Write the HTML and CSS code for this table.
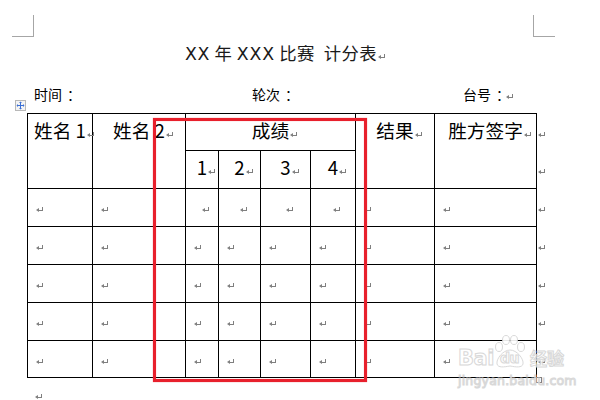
FILE: index.html
```html
<!DOCTYPE html>
<html lang="zh-CN">
<head>
<meta charset="utf-8">
<title>计分表</title>
<link rel="stylesheet" href="styles.css">
</head>
<body>
<div class="page">
  <div class="corners">
    <span class="corner corner-l"></span>
    <span class="corner corner-r"></span>
  </div>

  <h1 class="title"><span class="lat">XX</span> 年 <span class="lat">XXX</span> 比赛 &nbsp;计分表<i class="ret tail"></i></h1>

  <div class="info">
    <span>时间<span class="colon">：</span></span>
    <span>轮次<span class="colon">：</span></span>
    <span>台号<span class="colon">：</span><i class="ret"></i></span>
  </div>

  <div class="table-wrap">
    <div class="grid">
      <div class="cell h rs2">姓名 1<i class="ret tail"></i></div>
      <div class="cell h rs2">姓名 2<i class="ret tail"></i></div>
      <div class="cell h cs4">成绩<i class="ret tail"></i></div>
      <div class="cell h rs2">结果<i class="ret tail"></i></div>
      <div class="cell h rs2">胜方签字<i class="ret tail"></i></div>
      <div class="cell h">1<i class="ret tail"></i></div>
      <div class="cell h">2<i class="ret tail"></i></div>
      <div class="cell h">3<i class="ret tail"></i></div>
      <div class="cell h">4<i class="ret tail"></i></div>

      <div class="cell l"><i class="ret"></i></div>
      <div class="cell l"><i class="ret"></i></div>
      <div class="cell c"><i class="ret"></i></div>
      <div class="cell c"><i class="ret"></i></div>
      <div class="cell c"><i class="ret"></i></div>
      <div class="cell c"><i class="ret"></i></div>
      <div class="cell l"><i class="ret"></i></div>
      <div class="cell l"><i class="ret"></i></div>

      <div class="cell l"><i class="ret"></i></div>
      <div class="cell l"><i class="ret"></i></div>
      <div class="cell l"><i class="ret"></i></div>
      <div class="cell l"><i class="ret"></i></div>
      <div class="cell l"><i class="ret"></i></div>
      <div class="cell l"><i class="ret"></i></div>
      <div class="cell l"><i class="ret"></i></div>
      <div class="cell l"><i class="ret"></i></div>

      <div class="cell l"><i class="ret"></i></div>
      <div class="cell l"><i class="ret"></i></div>
      <div class="cell l"><i class="ret"></i></div>
      <div class="cell l"><i class="ret"></i></div>
      <div class="cell l"><i class="ret"></i></div>
      <div class="cell l"><i class="ret"></i></div>
      <div class="cell l"><i class="ret"></i></div>
      <div class="cell l"><i class="ret"></i></div>

      <div class="cell l"><i class="ret"></i></div>
      <div class="cell l"><i class="ret"></i></div>
      <div class="cell l"><i class="ret"></i></div>
      <div class="cell l"><i class="ret"></i></div>
      <div class="cell l"><i class="ret"></i></div>
      <div class="cell l"><i class="ret"></i></div>
      <div class="cell l"><i class="ret"></i></div>
      <div class="cell l"><i class="ret"></i></div>

      <div class="cell l"><i class="ret"></i></div>
      <div class="cell l"><i class="ret"></i></div>
      <div class="cell l"><i class="ret"></i></div>
      <div class="cell l"><i class="ret"></i></div>
      <div class="cell l"><i class="ret"></i></div>
      <div class="cell l"><i class="ret"></i></div>
      <div class="cell l"><i class="ret"></i></div>
      <div class="cell l"><i class="ret"></i></div>
    </div>
    <div class="rowends">
      <div class="rowend"><i class="ret"></i></div>
      <div class="rowend"><i class="ret"></i></div>
      <div class="rowend"><i class="ret"></i></div>
      <div class="rowend"><i class="ret"></i></div>
      <div class="rowend"><i class="ret"></i></div>
      <div class="rowend"><i class="ret"></i></div>
      <div class="rowend"><i class="ret"></i></div>
    </div>
  </div>

  <p class="after"><i class="ret"></i></p>

  <span class="move-handle">
    <svg width="11" height="11" viewBox="0 0 11 11">
      <rect x="0.5" y="0.5" width="10" height="10" fill="#f4f4f4" stroke="#b8b8b8"/>
      <path d="M5.5 2 V9 M2 5.5 H9" stroke="#3b6fd4" stroke-width="1"/>
      <path d="M5.5 1.5 L4 3 H7 Z M5.5 9.5 L4 8 H7 Z M1.5 5.5 L3 4 V7 Z M9.5 5.5 L8 4 V7 Z" fill="#3b6fd4"/>
    </svg>
  </span>
  <span class="resize-handle"></span>

  <div class="highlight"></div>

  <div class="watermark">
    <div class="wm-logo">
      <span class="wm-bai">Bai</span>
      <span class="wm-paw">
        <svg width="36" height="34" viewBox="0 0 36 34">
          <g fill="#ffffff" stroke="#d6d6d6" stroke-width="1">
            <ellipse cx="7" cy="12" rx="3.5" ry="4.5"/>
            <ellipse cx="14" cy="5" rx="3.5" ry="4.5"/>
            <ellipse cx="22" cy="5" rx="3.5" ry="4.5"/>
            <ellipse cx="29" cy="12" rx="3.5" ry="4.5"/>
            <path d="M18 15 C11 15 4 24 5 29 C6 33 12 32 18 31 C24 32 30 33 31 29 C32 24 25 15 18 15 Z"/>
          </g>
        </svg>
        <span class="wm-du">du</span>
      </span>
      <span class="wm-jy">经验</span>
    </div>
    <div class="wm-url">jingyan.baidu.com</div>
  </div>
</div>
</body>
</html>
```

FILE: styles.css
```css
html, body {
  margin: 0;
  padding: 0;
  background: #ffffff;
}

.page {
  position: relative;
  width: 600px;
  height: 400px;
  overflow: hidden;
  background: #ffffff;
  color: #000000;
  font-family: "Noto Sans CJK SC", "Noto Sans", sans-serif;
}

/* page corner marks */
.corners {
  display: flex;
  justify-content: space-between;
  padding: 15px 45px 0 12px;
}
.corner {
  display: block;
  height: 21px;
}
.corner-l {
  width: 21px;
  border-right: 1px solid #a6a6a6;
  border-bottom: 1px solid #a6a6a6;
}
.corner-r {
  width: 21px;
  border-left: 1px solid #a6a6a6;
  border-bottom: 1px solid #a6a6a6;
}

/* title */
.title {
  margin: 4px 0 0 34px;
  width: 494px;
  text-align: center;
  font-size: 17.33px;
  line-height: 24px;
  font-weight: normal;
  letter-spacing: 0.5px;
  white-space: pre;
  color: #1a1a1a;
}
.lat {
  font-family: "DejaVu Sans", sans-serif;
  letter-spacing: 0.8px;
}

/* info line */
.info {
  display: grid;
  grid-template-columns: 218px 211px auto;
  margin: 18px 0 0 34px;
  font-size: 14px;
  line-height: 20px;
}
.colon {
  display: inline-block;
  padding-left: 5px;
  margin-right: -5px;
}

/* paragraph mark */
.ret {
  display: inline-block;
  position: relative;
  width: 7px;
  height: 6px;
  margin-left: 1px;
  vertical-align: 0;
}
.ret::before {
  content: "";
  position: absolute;
  right: 0;
  top: 0;
  width: 4px;
  height: 3px;
  border-right: 1px solid #7f7f7f;
  border-bottom: 1px solid #7f7f7f;
}
.ret::after {
  content: "";
  position: absolute;
  left: 0;
  top: 1px;
  width: 0;
  height: 0;
  border-right: 3px solid #7f7f7f;
  border-top: 2.5px solid transparent;
  border-bottom: 2.5px solid transparent;
}
.ret.tail {
  margin-right: -8px;
}

/* table */
.table-wrap {
  display: flex;
  margin: 9px 0 0 27px;
}
.grid {
  display: grid;
  grid-template-columns: 65px 93px 33px 42px 50px 45px 79px 102px;
  grid-template-rows: 37px 38px 38px 38px 38px 38px 37px;
  border-left: 1px solid #000000;
  border-top: 1px solid #000000;
}
.cell {
  box-sizing: border-box;
  border-right: 1px solid #000000;
  border-bottom: 1px solid #000000;
  font-size: 18.67px;
  line-height: 24px;
  padding-top: 4px;
  white-space: pre;
}
.h {
  text-align: center;
}
.rs2 {
  grid-row: span 2;
}
.cs4 {
  grid-column: span 4;
}
.l {
  padding-left: 7px;
}
.c .ret {
  margin-left: 50%;
}

.rowends {
  display: grid;
  grid-template-rows: 37px 38px 38px 38px 38px 38px 37px;
  padding-top: 1px;
}
.rowend {
  padding: 4px 0 0 0;
  font-size: 18.67px;
  line-height: 24px;
}
.rowend .ret {
  margin-left: 1px;
}

.after {
  margin: 6px 0 0 34px;
  font-size: 14px;
  line-height: 20px;
}

/* Word overlays */
.move-handle {
  position: absolute;
  left: 15px;
  top: 100px;
  width: 11px;
  height: 11px;
  line-height: 0;
}
.resize-handle {
  position: absolute;
  left: 536px;
  top: 377px;
  width: 4px;
  height: 4px;
  border: 1px solid #808080;
  background: #ffffff;
}

/* red annotation box */
.highlight {
  position: absolute;
  left: 153px;
  top: 118px;
  width: 214px;
  height: 264px;
  box-sizing: border-box;
  border: 3px solid #e8202c;
  box-shadow: 0 0 1px rgba(232, 32, 44, 0.6), inset 0 0 1px rgba(232, 32, 44, 0.6);
}

/* watermark */
.watermark {
  position: absolute;
  left: 458px;
  top: 333px;
  width: 112px;
  opacity: 0.9;
}
.wm-logo {
  display: flex;
  align-items: flex-end;
  height: 36px;
}
.wm-bai,
.wm-du,
.wm-jy,
.wm-url {
  color: #ffffff;
  -webkit-text-stroke: 1px #d4d4d4;
  font-family: "DejaVu Sans", "Noto Sans CJK SC", sans-serif;
  font-weight: bold;
}
.wm-bai {
  font-size: 21px;
  line-height: 22px;
  letter-spacing: -0.5px;
}
.wm-paw {
  position: relative;
  display: block;
  width: 36px;
  height: 34px;
  margin-left: -2px;
}
.wm-paw svg {
  display: block;
}
.wm-du {
  position: absolute;
  left: 8px;
  top: 15px;
  font-size: 14px;
  line-height: 16px;
  letter-spacing: -0.5px;
}
.wm-jy {
  font-size: 17px;
  line-height: 22px;
  font-family: "Noto Sans CJK SC", sans-serif;
  margin-left: 2px;
}
.wm-url {
  margin-top: 5px;
  font-size: 12.5px;
  line-height: 14px;
  font-weight: normal;
  letter-spacing: 0.2px;
}
```
